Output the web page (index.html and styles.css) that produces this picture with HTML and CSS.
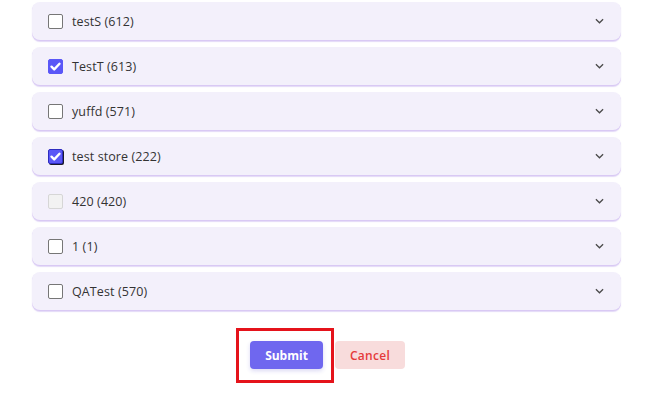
FILE: index.html
```html
<!DOCTYPE html>
<html>
<head>
<meta charset="utf-8">
<link rel="stylesheet" href="styles.css">
</head>
<body>
<div class="page">
  <div class="list">
    <div class="card"><span class="cb"></span><span class="label">testS (612)</span><svg class="chev" viewBox="0 0 10 6"><path d="M1 1l4 4 4-4"/></svg></div>
    <div class="card"><span class="cb checked"><svg viewBox="0 0 12 12"><path d="M2.3 6.2l2.5 2.5 4.9-5.2"/></svg></span><span class="label">TestT (613)</span><svg class="chev" viewBox="0 0 10 6"><path d="M1 1l4 4 4-4"/></svg></div>
    <div class="card"><span class="cb"></span><span class="label">yuffd (571)</span><svg class="chev" viewBox="0 0 10 6"><path d="M1 1l4 4 4-4"/></svg></div>
    <div class="card"><span class="cb checked focus"><svg viewBox="0 0 12 12"><path d="M2.3 6.2l2.5 2.5 4.9-5.2"/></svg></span><span class="label">test store (222)</span><svg class="chev" viewBox="0 0 10 6"><path d="M1 1l4 4 4-4"/></svg></div>
    <div class="card"><span class="cb disabled"></span><span class="label">420 (420)</span><svg class="chev" viewBox="0 0 10 6"><path d="M1 1l4 4 4-4"/></svg></div>
    <div class="card"><span class="cb"></span><span class="label">1 (1)</span><svg class="chev" viewBox="0 0 10 6"><path d="M1 1l4 4 4-4"/></svg></div>
    <div class="card"><span class="cb"></span><span class="label">QATest (570)</span><svg class="chev" viewBox="0 0 10 6"><path d="M1 1l4 4 4-4"/></svg></div>
  </div>
  <div class="actions">
    <div class="submit-wrap">
      <button class="btn submit">Submit</button>
      <span class="highlight"></span>
    </div>
    <button class="btn cancel">Cancel</button>
  </div>
</div>
</body>
</html>
```

FILE: styles.css
```css
html, body {
  margin: 0;
  padding: 0;
  background: #ffffff;
}
body {
  font-family: "Open Sans", "Noto Sans", sans-serif;
  color: #333;
}
.page {
  width: 653px;
  min-height: 402px;
  padding: 2px 0 0 32px;
  box-sizing: border-box;
}
.list {
  width: 589px;
  display: flex;
  flex-direction: column;
  gap: 7px;
}
.card {
  height: 38px;
  background: #f3f0fb;
  border-radius: 8px;
  box-shadow: 0 1px 0 #d9c9f4, 0 1.5px 1px rgba(200,180,240,0.5);
  display: flex;
  align-items: center;
  padding: 0 15px 0 16px;
  box-sizing: border-box;
}
.cb {
  width: 15px;
  height: 15px;
  box-sizing: border-box;
  border: 1px solid #767676;
  border-radius: 2px;
  background: #fff;
  flex: none;
  display: flex;
  align-items: center;
  justify-content: center;
}
.cb.checked {
  background: #5a57f7;
  border-color: #5a57f7;
}
.cb.focus {
  box-shadow: 1px 1px 0 #1a1a2a;
  border-color: #2e2cc0;
}
.cb.disabled {
  background: #f2f2f2;
  border-color: #d6d6d6;
}
.cb svg {
  width: 13px;
  height: 13px;
  fill: none;
  stroke: #fff;
  stroke-width: 2.2;
  stroke-linecap: round;
  stroke-linejoin: round;
}
.label {
  margin-left: 9px;
  font-size: 12.5px;
  color: #333;
  flex: 1;
  letter-spacing: 0.1px;
}
.chev {
  width: 9px;
  height: 6px;
  fill: none;
  stroke: #4a4a4a;
  stroke-width: 1.4;
  margin-right: 2px;
}
.actions {
  width: 589px;
  display: flex;
  justify-content: center;
  gap: 12px;
  margin-top: 31px;
  padding-left: 1px;
}
.submit-wrap {
  position: relative;
  height: 28px;
}
.btn {
  height: 28px;
  border: none;
  border-radius: 4px;
  font-family: "Open Sans", "Noto Sans", sans-serif;
  font-size: 12px;
  cursor: pointer;
  display: flex;
  align-items: center;
  justify-content: center;
}
.submit {
  width: 73px;
  background: #6f67ef;
  color: #fff;
  font-weight: 700;
  box-shadow: 0 2px 4px rgba(80,70,200,0.2);
}
.cancel {
  width: 70px;
  background: #f8dcdc;
  color: #e53a3a;
  font-weight: 600;
  letter-spacing: 0.3px;
}
.highlight {
  position: absolute;
  left: -14px;
  top: -13px;
  width: 98px;
  height: 55px;
  border: 3px solid #e5131b;
  box-sizing: border-box;
  display: block;
}
```
